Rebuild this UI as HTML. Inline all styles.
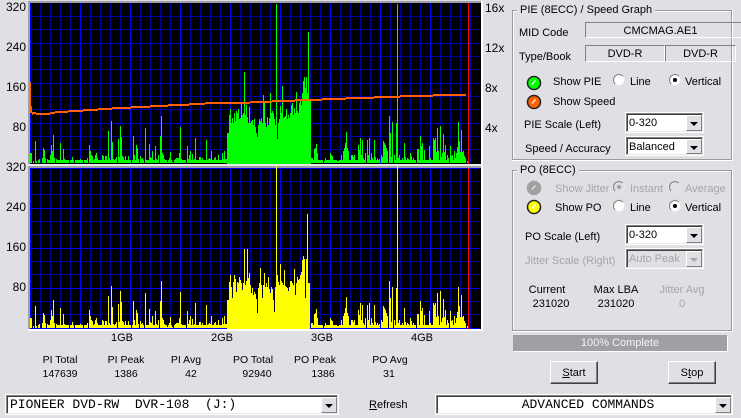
<!DOCTYPE html>
<html><head><meta charset="utf-8"><style>
html,body{margin:0;padding:0;background:#e0dfe3}
#a{position:relative;width:741px;height:418px;overflow:hidden;background:#e0dfe3;font:11px "Liberation Sans",sans-serif;color:#000}
.t{position:absolute;white-space:nowrap;line-height:13px}
.c{transform:translateX(-50%)}
.r{text-align:right;width:30px}
.g{color:#a6a6a8}
.leg{position:absolute;background:#e0dfe3;padding:0 3px;line-height:13px;white-space:nowrap}
.f{position:absolute;box-sizing:border-box;border:1px solid;border-color:#808080 #fff #fff #808080;text-align:center;line-height:16px}
.dd{position:absolute;box-sizing:border-box;background:#fff;border:2px solid;border-color:#808080 #e8e8e8 #e8e8e8 #808080;outline:1px solid #fff;outline-offset:-1px;padding-left:2px;line-height:18px;white-space:pre;overflow:hidden;box-shadow:inset 1px 1px 0 #404040}
.ar{position:absolute;right:0;top:1px;bottom:0;width:16px;background:#e0dfe3;border:1px solid;border-color:#fff #808080 #808080 #fff;box-sizing:border-box}
.ar:after{content:"";position:absolute;left:3px;top:6px;border:4px solid transparent;border-top:4px solid #000;border-bottom:0}
.dis{background:#e0dfe3;color:#a6a6a8}
.dis .ar:after{border-top-color:#a6a6a8}
.btn{position:absolute;box-sizing:border-box;background:#e0dfe3;border:1px solid;border-color:#fff #404040 #404040 #fff;box-shadow:inset -1px -1px 0 #808080;text-align:center;line-height:22px}
.rad{position:absolute;width:12px;height:12px;border-radius:50%;background:#fff;box-sizing:border-box;border:1px solid;border-color:#808080 #e8e8e8 #e8e8e8 #808080}
.rad.on:after{content:"";position:absolute;left:3px;top:3px;width:4px;height:4px;border-radius:50%;background:#000}
.rad.off{background:#e0dfe3}
.rad.offg:after{content:"";position:absolute;left:3px;top:3px;width:4px;height:4px;border-radius:50%;background:#a0a0a0}
u{text-decoration:underline}
</style></head><body><div id="a">

<svg style="position:absolute;left:0;top:0" width="741" height="418" shape-rendering="crispEdges">
<defs>
<path id="low" fill="none" stroke-width="1" d="M30.5 163V153M31.5 163V153M33.5 163V161M35.5 163V141M36.5 163V161M38.5 163V160M39.5 163V159M42.5 163V158M43.5 163V148M44.5 163V150M45.5 163V158M47.5 163V159M48.5 163V160M50.5 163V155M51.5 163V145M52.5 163V151M53.5 163V135M54.5 163V158M56.5 163V159M57.5 163V161M60.5 163V143M61.5 163V160M63.5 163V149M64.5 163V159M66.5 163V162M68.5 163V161M72.5 163V157M73.5 163V160M75.5 163V160M76.5 163V160M78.5 163V161M80.5 163V159M82.5 163V160M84.5 163V160M85.5 163V161M87.5 163V158M89.5 163V145M90.5 163V151M91.5 163V155M92.5 163V156M94.5 163V159M95.5 163V155M96.5 163V153M97.5 163V158M98.5 163V160M100.5 163V161M102.5 163V155M103.5 163V156M105.5 163V156M106.5 163V156M108.5 163V131M109.5 163V158M111.5 163V121M112.5 163V142M113.5 163V159M115.5 163V159M116.5 163V157M118.5 163V139M119.5 163V157M120.5 163V126M121.5 163V137M122.5 163V156M123.5 163V157M125.5 163V156M127.5 163V160M128.5 163V156M130.5 163V160M133.5 163V136M134.5 163V155M136.5 163V145M137.5 163V148M138.5 163V159M140.5 163V156M141.5 163V159M142.5 163V158M143.5 163V160M145.5 163V128M146.5 163V160M147.5 163V160M149.5 163V144M150.5 163V157M151.5 163V158M152.5 163V151M153.5 163V160M155.5 163V146M156.5 163V159M158.5 163V155M160.5 163V136M161.5 163V116M162.5 163V153M163.5 163V155M164.5 163V159M167.5 163V162M168.5 163V160M169.5 163V158M170.5 163V152M172.5 163V162M174.5 163V160M175.5 163V159M176.5 163V158M177.5 163V158M178.5 163V158M179.5 163V153M180.5 163V127M181.5 163V159M183.5 163V161M184.5 163V162M187.5 163V146M188.5 163V159M189.5 163V155M190.5 163V151M191.5 163V160M192.5 163V154M194.5 163V159M195.5 163V138M196.5 163V160M198.5 163V162M199.5 163V157M200.5 163V157M201.5 163V160M202.5 163V158M204.5 163V161M206.5 163V140M207.5 163V160M208.5 163V159M209.5 163V158M210.5 163V159M211.5 163V151M212.5 163V160M214.5 163V158M215.5 163V157M216.5 163V161M218.5 163V155M220.5 163V162M222.5 163V153M223.5 163V159M224.5 163V151M225.5 163V159M226.5 163V159"/>
<path id="hi" fill="none" stroke-width="1" d="M311.5 163V158M312.5 163V158M313.5 163V161M314.5 163V149M315.5 163V148M316.5 163V144M317.5 163V153M318.5 163V160M319.5 163V161M322.5 163V160M324.5 163V161M325.5 163V158M326.5 163V161M330.5 163V153M331.5 163V155M332.5 163V156M337.5 163V161M338.5 163V161M341.5 163V155M343.5 163V151M344.5 163V148M345.5 163V143M346.5 163V132M347.5 163V148M348.5 163V151M349.5 163V160M351.5 163V155M352.5 163V155M353.5 163V157M354.5 163V155M358.5 163V145M359.5 163V150M360.5 163V138M361.5 163V155M362.5 163V140M363.5 163V158M365.5 163V153M367.5 163V140M368.5 163V155M369.5 163V138M371.5 163V153M372.5 163V158M374.5 163V140M375.5 163V157M377.5 163V158M379.5 163V159M381.5 163V155M382.5 163V157M383.5 163V141M384.5 163V143M385.5 163V145M386.5 163V148M387.5 163V151M389.5 163V116M390.5 163V133M391.5 163V157M392.5 163V122M394.5 163V155M396.5 163V123M398.5 163V158M399.5 163V155M400.5 163V160M402.5 163V158M404.5 163V143M405.5 163V157M407.5 163V158M408.5 163V159M410.5 163V153M411.5 163V156M413.5 163V158M414.5 163V160M417.5 163V149M418.5 163V149M420.5 163V136M421.5 163V146M422.5 163V143M424.5 163V150M425.5 163V161M427.5 163V161M429.5 163V146M430.5 163V158M433.5 163V138M434.5 163V140M435.5 163V138M436.5 163V152M437.5 163V128M438.5 163V151M440.5 163V126M441.5 163V157M442.5 163V153M443.5 163V134M444.5 163V152M445.5 163V145M447.5 163V155M448.5 163V158M450.5 163V146M451.5 163V156M452.5 163V155M454.5 163V151M455.5 163V158M456.5 163V153M457.5 163V147M458.5 163V122M459.5 163V141M460.5 163V152M461.5 163V130M462.5 163V152M463.5 163V151M464.5 163V156M465.5 163V158M467.5 163V161"/>
<path id="fill" fill="none" stroke-width="3" stroke-dasharray="7 1 4 2" d="M48 161.5H227M311 161.5H466"/>
<g id="grid">
<path fill="none" stroke="#0000a0" d="M40.5 0V160M50.5 0V160M60.5 0V160M70.5 0V160M90.5 0V160M100.5 0V160M110.5 0V160M120.5 0V160M140.5 0V160M150.5 0V160M160.5 0V160M170.5 0V160M190.5 0V160M200.5 0V160M210.5 0V160M220.5 0V160M240.5 0V160M250.5 0V160M260.5 0V160M270.5 0V160M290.5 0V160M300.5 0V160M310.5 0V160M320.5 0V160M340.5 0V160M350.5 0V160M360.5 0V160M370.5 0V160M390.5 0V160M400.5 0V160M410.5 0V160M420.5 0V160M440.5 0V160M450.5 0V160M460.5 0V160M470.5 0V160"/>
<path fill="none" stroke="#0000a0" d="M30 13.5H480M30 26.5H480M30 53.5H480M30 66.5H480M30 93.5H480M30 106.5H480M30 133.5H480M30 146.5H480"/>
</g>
</defs>

<!-- frames -->
<rect x="28" y="1" width="454" height="164" fill="#a0a0a4"/>
<rect x="28" y="164" width="454" height="2" fill="#e8e8e8"/>
<rect x="28" y="166" width="454" height="164" fill="#a0a0a4"/>
<rect x="481" y="166" width="2" height="165" fill="#fff"/>
<rect x="28" y="329" width="455" height="2" fill="#fff"/>
<rect x="481" y="1" width="2" height="165" fill="#fff"/>

<!-- top chart -->
<svg x="30" y="3" width="451" height="161" viewBox="30 3 451 161" overflow="hidden" shape-rendering="crispEdges">
<rect x="30" y="3" width="451" height="161" fill="#000"/>
<g transform="translate(0,3)"><use href="#grid"/></g>
<path fill="none" stroke="#0000c8" d="M30 43.5H480M30 83.5H480M30 123.5H480"/>
<path fill="none" stroke="#0000ff" d="M30.5 3V164M80.5 3V164M130.5 3V164M180.5 3V164M230.5 3V164M280.5 3V164M330.5 3V164M380.5 3V164M430.5 3V164"/>
<path fill="none" stroke="#ff0000" d="M468.5 3V164"/>
<use href="#low" stroke="#00ff00"/>
<use href="#hi" stroke="#00ff00"/>
<use href="#fill" stroke="#00ff00"/>
<path fill="#00ff00" d="M227 164V133h2V115h1V109h1V123h1V118h1V123h1V113h1V121h1V111h1V113h1V109h1V119h1V118h1V103h1V115h1V113h1V72h1V115h1V105h1V117h1V123h1V107h1V123h1V121h1V120h1V125h1V119h1V127h1V133h1V137h1V125h1V119h1V121h1V118h1V123h1V95h1V103h1V123h1V127h1V117h1V125h1V118h1V93h1V113h1V111h1V113h1V119h1V125h1V125h1V139h1V123h1V119h1V106h1V113h1V86h1V118h1V117h1V116h1V109h1V119h1V115h1V118h1V113h1V105h1V103h1V115h1V108h1V113h1V92h1V111h1V113h1V103h1V101h1V105h1V93h1V81h1V77h1V88h1V77h1V93h1V32h1V100h2V164z"/>
<path fill="none" stroke="#00ff00" d="M244.5 163V72M276.5 163V4M397.5 163V4M308.5 163V32"/>
<path fill="none" stroke="#ff6000" stroke-width="1" d="M30.5 82V113M31.5 106V113M32.5 112V115"/>
<path fill="none" stroke="#ff6000" stroke-width="2" d="M33 113H36M36 114H50M50 113H55M55 112H68M68 111H83M83 110H98M98 109H112M112 108H131M131 107H150M150 106H168M168 105H189M189 104H205M205 103H250M250 102H272M272 101H295M295 100H322M322 99H346M346 98H374M374 97H400M400 96H433M433 95H466"/>
</svg>

<!-- bottom chart -->
<svg x="30" y="168" width="451" height="161" viewBox="30 3 451 161" overflow="hidden" shape-rendering="crispEdges">
<rect x="30" y="3" width="451" height="161" fill="#000"/>
<g transform="translate(0,3)"><use href="#grid"/></g>
<path fill="none" stroke="#0000ff" d="M30 3.5H480M30 43.5H480M30 83.5H480M30 123.5H480M30 163.5H480"/>
<path fill="none" stroke="#0000ff" d="M30.5 3V164M80.5 3V164M130.5 3V164M180.5 3V164M230.5 3V164M280.5 3V164M330.5 3V164M380.5 3V164M430.5 3V164"/>
<path fill="none" stroke="#ff0000" d="M468.5 3V164"/>
<use href="#low" stroke="#ffff00"/>
<use href="#hi" stroke="#ffff00"/>
<use href="#fill" stroke="#ffff00"/>
<path fill="#ffff00" d="M227 164V135h2V117h1V110h1V122h1V133h1V117h1V110h1V114h1V127h1V117h1V118h1V112h1V115h1V118h1V125h1V118h1V110h1V120h1V116h1V84h1V113h1V108h1V120h1V128h1V123h1V130h1V127h1V129h1V134h1V148h1V123h1V118h1V103h1V120h1V133h1V120h1V108h1V122h1V118h1V122h1V112h1V124h1V128h1V122h1V124h1V135h1V147h1V122h1V116h1V110h1V117h1V120h1V99h1V116h1V118h1V120h1V105h1V121h1V122h1V123h1V126h1V122h1V116h1V116h1V118h1V120h1V104h1V130h1V118h1V112h1V115h1V114h1V110h1V107h1V95h1V91h1V94h1V133h1V94h1V49h1V118h2V164z"/>
<path fill="none" stroke="#ffff00" d="M244.5 163V84M276.5 163V3M397.5 163V3"/>
</svg>

<!-- tiny tick marks under top chart -->
<path fill="none" stroke="#ffff00" d="M276.5 166V168M397.5 166V168"/>

<!-- panel group boxes etched -->
<path fill="none" stroke="#9a9a9c" d="M512.5 10.5H731.5V159.5H512.5ZM512.5 170.5H731.5V330.5H512.5Z"/>
<path fill="none" stroke="#ffffff" d="M513.5 11.5H730.5M513.5 11.5V158.5M732.5 10V160.5H512M513.5 171.5H730.5M513.5 171.5V329.5M732.5 170V331.5H512"/>
</svg>

<!-- axis labels -->
<div class="t r" style="left:-4px;top:1px;font-size:12px">320</div>
<div class="t r" style="left:-4px;top:41px;font-size:12px">240</div>
<div class="t r" style="left:-4px;top:81px;font-size:12px">160</div>
<div class="t r" style="left:-4px;top:121px;font-size:12px">80</div>
<div class="t r" style="left:-4px;top:161px;font-size:12px">320</div>
<div class="t r" style="left:-4px;top:201px;font-size:12px">240</div>
<div class="t r" style="left:-4px;top:241px;font-size:12px">160</div>
<div class="t r" style="left:-4px;top:281px;font-size:12px">80</div>
<div class="t" style="left:485px;top:2px;font-size:12px">16x</div>
<div class="t" style="left:485px;top:42px;font-size:12px">12x</div>
<div class="t" style="left:485px;top:82px;font-size:12px">8x</div>
<div class="t" style="left:485px;top:122px;font-size:12px">4x</div>

<div class="t c" style="left:122px;top:332px">1GB</div>
<div class="t c" style="left:222px;top:332px">2GB</div>
<div class="t c" style="left:322px;top:332px">3GB</div>
<div class="t c" style="left:422px;top:332px">4GB</div>

<div class="t c" style="left:60px;top:354px;font-size:10.5px">PI Total</div>
<div class="t c" style="left:60px;top:368px;font-size:10.5px">147639</div>
<div class="t c" style="left:126px;top:354px;font-size:10.5px">PI Peak</div>
<div class="t c" style="left:126px;top:368px;font-size:10.5px">1386</div>
<div class="t c" style="left:186px;top:354px;font-size:10.5px">PI Avg</div>
<div class="t c" style="left:191px;top:368px;font-size:10.5px">42</div>
<div class="t c" style="left:253px;top:354px;font-size:10.5px">PO Total</div>
<div class="t c" style="left:257px;top:368px;font-size:10.5px">92940</div>
<div class="t c" style="left:315px;top:354px;font-size:10.5px">PO Peak</div>
<div class="t c" style="left:323px;top:368px;font-size:10.5px">1386</div>
<div class="t c" style="left:390px;top:354px;font-size:10.5px">PO Avg</div>
<div class="t c" style="left:389px;top:368px;font-size:10.5px">31</div>

<!-- PIE group -->
<div class="leg" style="left:517px;top:4px">PIE (8ECC) / Speed Graph</div>
<div class="t" style="left:519px;top:27px">MID Code</div>
<div class="f" style="left:585px;top:22px;width:170px;height:16px;padding-right:19px">CMCMAG.AE1</div>
<div class="t" style="left:519px;top:51px">Type/Book</div>
<div class="f" style="left:585px;top:45px;width:80px;height:17px">DVD-R</div>
<div class="f" style="left:665px;top:45px;width:71px;height:17px">DVD-R</div>

<svg style="position:absolute;left:525px;top:74px" width="18" height="38">
<circle cx="9" cy="9" r="6.5" fill="#00ff00" stroke="#222" stroke-width="1.5"/>
<path d="M7 10.5L10.5 6.5" stroke="#fff" stroke-width="1.3" fill="none"/>
<circle cx="9" cy="28" r="6.5" fill="#ff6000" stroke="#222" stroke-width="1.5"/>
<path d="M7 29.5L10.5 25.5" stroke="#fff" stroke-width="1.3" fill="none"/>
</svg>
<div class="t" style="left:553px;top:76px">Show PIE</div>
<div class="t" style="left:553px;top:96px">Show Speed</div>
<div class="rad" style="left:613px;top:74px"></div>
<div class="t" style="left:630px;top:76px">Line</div>
<div class="rad on" style="left:669px;top:74px"></div>
<div class="t" style="left:685px;top:76px">Vertical</div>

<div class="t" style="left:524px;top:119px">PIE Scale (Left)</div>
<div class="dd" style="left:625px;top:112px;width:79px;height:21px">0-320<div class="ar"></div></div>
<div class="t" style="left:525px;top:143px">Speed / Accuracy</div>
<div class="dd" style="left:625px;top:136px;width:79px;height:20px">Balanced<div class="ar"></div></div>

<!-- PO group -->
<div class="leg" style="left:517px;top:164px">PO (8ECC)</div>
<svg style="position:absolute;left:525px;top:179px" width="18" height="37">
<circle cx="9" cy="9" r="6.5" fill="#a0a0a0" stroke="#a0a0a0" stroke-width="1.5"/>
<path d="M7 10.5L10.5 6.5" stroke="#e8e8e8" stroke-width="1.3" fill="none"/>
<circle cx="9" cy="28" r="6.5" fill="#ffff00" stroke="#222" stroke-width="1.5"/>
<path d="M7 29.5L10.5 25.5" stroke="#fff" stroke-width="1.3" fill="none"/>
</svg>
<div class="t g" style="left:555px;top:183px">Show Jitter</div>
<div class="t" style="left:555px;top:202px">Show PO</div>
<div class="rad offg off" style="left:613px;top:181px"></div>
<div class="t g" style="left:630px;top:183px">Instant</div>
<div class="rad off" style="left:669px;top:181px"></div>
<div class="t g" style="left:685px;top:183px">Average</div>
<div class="rad" style="left:613px;top:200px"></div>
<div class="t" style="left:630px;top:202px">Line</div>
<div class="rad on" style="left:669px;top:200px"></div>
<div class="t" style="left:685px;top:202px">Vertical</div>

<div class="t" style="left:525px;top:231px">PO Scale (Left)</div>
<div class="dd" style="left:625px;top:224px;width:79px;height:21px">0-320<div class="ar"></div></div>
<div class="t g" style="left:525px;top:255px">Jitter Scale (Right)</div>
<div class="dd dis" style="left:625px;top:248px;width:79px;height:21px">Auto Peak<div class="ar"></div></div>

<div class="t c" style="left:547px;top:284px">Current</div>
<div class="t c" style="left:551px;top:298px">231020</div>
<div class="t c" style="left:616px;top:284px">Max LBA</div>
<div class="t c" style="left:616px;top:298px">231020</div>
<div class="t c g" style="left:682px;top:284px">Jitter Avg</div>
<div class="t c g" style="left:682px;top:298px">0</div>

<!-- progress -->
<div class="t" style="left:513px;top:335px;width:214px;height:16px;background:#a0a0a4;color:#f4f4f4;text-align:center;line-height:16px;box-shadow:1px 1px 0 #fff">100% Complete</div>

<div class="btn" style="left:550px;top:361px;width:48px;height:23px"><u>S</u>tart</div>
<div class="btn" style="left:668px;top:361px;width:48px;height:23px">S<u>t</u>op</div>

<!-- bottom row -->
<div class="dd" style="left:5px;top:394px;width:334px;height:21px;font:13px 'Liberation Mono',monospace;line-height:18px;padding-left:3px">PIONEER DVD-RW  DVR-108  (J:)<div class="ar"></div></div>
<div class="t" style="left:369px;top:399px"><u>R</u>efresh</div>
<div class="dd" style="left:435px;top:394px;width:298px;height:21px;font:13px 'Liberation Mono',monospace;line-height:18px;text-align:center;padding-left:16px;padding-right:8px">ADVANCED COMMANDS<div class="ar"></div></div>

</div></body></html>
